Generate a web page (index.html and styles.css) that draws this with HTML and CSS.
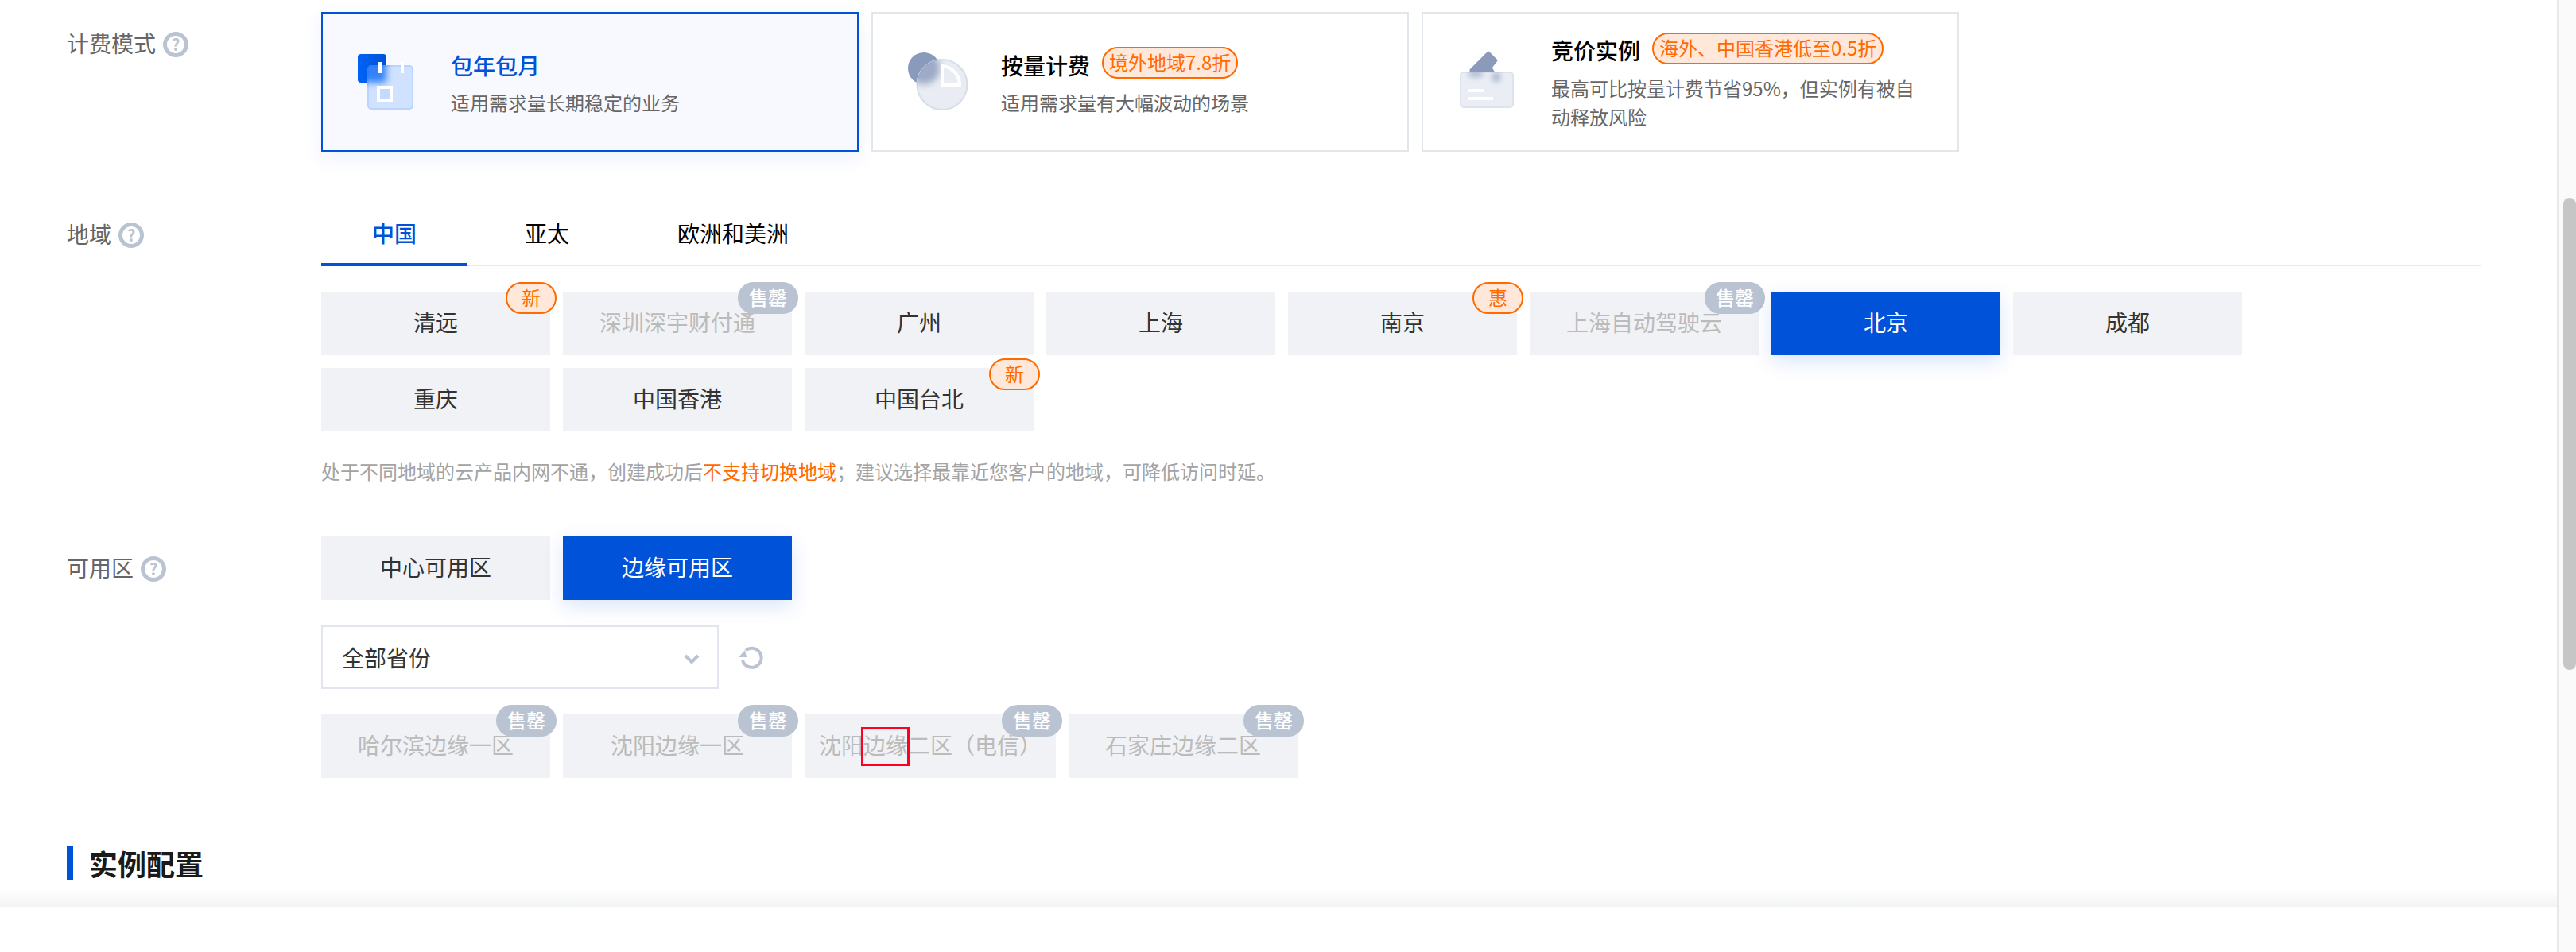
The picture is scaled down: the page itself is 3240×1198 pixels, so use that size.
FILE: index.html
```html
<!DOCTYPE html>
<html lang="zh-CN">
<head>
    <meta charset="UTF-8">
    <title>实例购买</title>
    <link rel="stylesheet" href="styles.css">
</head>
<body>
    <div class="page">
        <main class="main">
            <!-- 计费模式 -->
            <section class="form-row">
                <div class="form-label">计费模式<span class="help">?</span></div>
                <div class="plans">
                    <div class="plan plan-active">
                        <svg class="plan-icon" viewBox="0 0 80 80">
                            <defs>
                                <clipPath id="clipYear"><rect x="14" y="19" width="58" height="56" rx="4"/></clipPath>
                                <filter id="blurYear" x="-50%" y="-50%" width="200%" height="200%"><feGaussianBlur stdDeviation="4"/></filter>
                                <linearGradient id="gradYear" x1="0" y1="0" x2="1" y2="0"><stop offset="0" stop-color="#0062f5"/><stop offset="1" stop-color="#0052d9"/></linearGradient>
                            </defs>
                            <rect x="2" y="5" width="36" height="36" rx="4" fill="url(#gradYear)"/>
                            <rect x="15" y="20" width="56" height="54" rx="4" fill="#d0e2ff" stroke="#b8d4ff" stroke-width="2"/>
                            <g clip-path="url(#clipYear)"><rect x="2" y="5" width="36" height="36" rx="4" fill="#0062f5" opacity=".75" filter="url(#blurYear)"/></g>
                            <rect x="28" y="15" width="4" height="14" fill="#fff"/>
                            <rect x="56" y="15" width="4" height="14" fill="#fff"/>
                            <rect x="28" y="47" width="16" height="16" fill="#c4daff" stroke="#fff" stroke-width="4"/>
                        </svg>
                        <div class="plan-info">
                            <div class="plan-title">包年包月</div>
                            <div class="plan-desc">适用需求量长期稳定的业务</div>
                        </div>
                    </div>
                    <div class="plan">
                        <svg class="plan-icon" viewBox="0 0 80 80">
                            <defs>
                                <clipPath id="clipUsage"><circle cx="45" cy="43.5" r="32"/></clipPath>
                                <filter id="blurUsage" x="-50%" y="-50%" width="200%" height="200%"><feGaussianBlur stdDeviation="4"/></filter>
                            </defs>
                            <circle cx="22" cy="23" r="20" fill="#8a9abb"/>
                            <circle cx="45" cy="43.5" r="31.5" fill="#e9edf3" stroke="#d6deea" stroke-width="2"/>
                            <g clip-path="url(#clipUsage)"><circle cx="22" cy="23" r="20" fill="#8a9abb" opacity=".8" filter="url(#blurUsage)"/></g>
                            <path d="M45 20 A24 24 0 0 1 67 44 L45 44 Z" fill="#e9edf3" stroke="#fff" stroke-width="4"/>
                        </svg>
                        <div class="plan-info">
                            <div class="plan-title">按量计费<span class="pill">境外地域7.8折</span></div>
                            <div class="plan-desc">适用需求量有大幅波动的场景</div>
                        </div>
                    </div>
                    <div class="plan">
                        <svg class="plan-icon" viewBox="0 0 80 80">
                            <defs>
                                <clipPath id="clipSpot"><rect x="4" y="27" width="68" height="46" rx="4"/></clipPath>
                                <filter id="blurSpot" x="-50%" y="-50%" width="200%" height="200%"><feGaussianBlur stdDeviation="3"/></filter>
                            </defs>
                            <path d="M18 25 L40 3 L50 13 L43 22 L46 27 L18 27 Z" fill="#8a9abb" stroke="#8a9abb" stroke-width="3" stroke-linejoin="round"/>
                            <rect x="5" y="28" width="66" height="44" rx="4" fill="#eaeef4" stroke="#dde3ec" stroke-width="2"/>
                            <g clip-path="url(#clipSpot)" filter="url(#blurSpot)" fill="#8a9abb" opacity=".55">
                                <ellipse cx="24" cy="30" rx="10" ry="5"/>
                                <ellipse cx="50" cy="34" rx="6" ry="7"/>
                            </g>
                            <rect x="14" y="49" width="20" height="4" fill="#fff"/>
                            <rect x="14" y="59" width="32" height="4" fill="#fff"/>
                        </svg>
                        <div class="plan-info plan-info-long">
                            <div class="plan-title">竞价实例<span class="pill">海外、中国香港低至0.5折</span></div>
                            <div class="plan-desc">最高可比按量计费节省95%，但实例有被自动释放风险</div>
                        </div>
                    </div>
                </div>
            </section>

            <!-- 地域 -->
            <section class="form-row">
                <div class="form-label">地域<span class="help">?</span></div>
                <div class="form-body">
                    <div class="tabs">
                        <div class="tab tab-active">中国</div>
                        <div class="tab">亚太</div>
                        <div class="tab">欧洲和美洲</div>
                    </div>
                    <div class="cells cells-region">
                        <div class="cell">清远<span class="tag">新</span></div>
                        <div class="cell cell-off">深圳深宇财付通<span class="tag tag-off">售罄</span></div>
                        <div class="cell">广州</div>
                        <div class="cell">上海</div>
                        <div class="cell">南京<span class="tag">惠</span></div>
                        <div class="cell cell-off">上海自动驾驶云<span class="tag tag-off">售罄</span></div>
                        <div class="cell cell-active">北京</div>
                        <div class="cell">成都</div>
                        <div class="cell">重庆</div>
                        <div class="cell">中国香港</div>
                        <div class="cell">中国台北<span class="tag">新</span></div>
                    </div>
                    <p class="hint">处于不同地域的云产品内网不通，创建成功后<em>不支持切换地域</em>；建议选择最靠近您客户的地域，可降低访问时延。</p>
                </div>
            </section>

            <!-- 可用区 -->
            <section class="form-row">
                <div class="form-label">可用区<span class="help">?</span></div>
                <div class="form-body">
                    <div class="cells">
                        <div class="cell">中心可用区</div>
                        <div class="cell cell-active">边缘可用区</div>
                    </div>
                    <div class="filter">
                        <div class="select">
                            <span>全部省份</span>
                            <svg class="select-arrow" viewBox="0 0 20 12"><path d="M2 2 L10 10 L18 2" fill="none" stroke="#bac3d1" stroke-width="4"/></svg>
                        </div>
                        <svg class="refresh" viewBox="0 0 32 32">
                            <path d="M9 7.5 A12 12 0 1 1 5 20" fill="none" stroke="#bac3d1" stroke-width="4"/>
                            <path d="M0 16 L10 16 L8 7 Z" fill="#bac3d1"/>
                        </svg>
                    </div>
                    <div class="cells">
                        <div class="cell cell-off">哈尔滨边缘一区<span class="tag tag-off">售罄</span></div>
                        <div class="cell cell-off">沈阳边缘一区<span class="tag tag-off">售罄</span></div>
                        <div class="cell cell-off">沈阳边缘二区（电信）<span class="tag tag-off">售罄</span><span class="mark"></span></div>
                        <div class="cell cell-off">石家庄边缘二区<span class="tag tag-off">售罄</span></div>
                    </div>
                </div>
            </section>

            <h2 class="section-title">实例配置</h2>
            <div class="bottom-bar"></div>
        </main>
        <div class="scrollbar"><div class="scrollbar-thumb"></div></div>
    </div>
</body>
</html>
```

FILE: styles.css
```css
* {
    box-sizing: border-box;
}
body {
    margin: 0;
    height: 1198px;
    overflow: hidden;
    background-color: #fff;
    color: #333;
    font-family: "Noto Sans CJK SC", "Liberation Sans", sans-serif;
    font-size: 28px;
}
.page {
    display: flex;
    height: 100%;
}
.main {
    position: relative;
    flex: 1;
    padding: 15px 96px 0 84px;
    overflow: hidden;
}
.scrollbar {
    width: 24px;
    padding: 249px 0 0 6px;
    background-color: #fafafa;
    border-left: 2px solid #e8e8e8;
}
.scrollbar-thumb {
    height: 594px;
    background-color: #c6c6c6;
    border-radius: 8px;
}

/* form rows */
.form-row {
    display: flex;
    margin-bottom: 64px;
}
.form-label {
    display: flex;
    flex: none;
    align-items: center;
    gap: 9px;
    width: 320px;
    height: 32px;
    margin-top: 23px;
    color: #666;
    line-height: 32px;
}
.help {
    display: flex;
    flex: none;
    align-items: center;
    justify-content: center;
    width: 32px;
    height: 32px;
    margin-top: 4px;
    border: 5px solid #bac3d1;
    border-radius: 50%;
    color: #bac3d1;
    font-size: 20px;
    font-weight: 700;
    line-height: 1;
}
.form-body {
    flex: 1;
    min-width: 0;
}

/* billing plans */
.plans {
    display: flex;
    gap: 16px;
}
.plan {
    display: flex;
    align-items: center;
    gap: 39px;
    width: 676px;
    height: 176px;
    padding-left: 42px;
    background-color: #fff;
    border: 2px solid #e3e6eb;
}
.plan-active {
    background-color: #f8f9ff;
    border-color: #0052d9;
    box-shadow: 0 8px 24px rgba(0, 82, 217, 0.08);
}
.plan-icon {
    flex: none;
    width: 80px;
    height: 80px;
}
.plan-title {
    display: flex;
    align-items: center;
    gap: 15px;
    height: 44px;
    color: #000;
    font-weight: 500;
}
.plan-active .plan-title {
    color: #0052d9;
}
.plan-desc {
    margin-top: 7px;
    color: #666;
    font-size: 24px;
    line-height: 36px;
}
.plan-info-long {
    width: 470px;
}
.plan-info-long .plan-desc {
    margin-top: 8px;
}
.pill {
    height: 40px;
    padding: 0 7px;
    margin-top: -5px;
    background-color: #ffe8d9;
    border: 2px solid #ff6a00;
    border-radius: 20px;
    color: #ff6a00;
    font-size: 24px;
    font-weight: 400;
    line-height: 34px;
}

/* tabs */
.tabs {
    display: flex;
    gap: 8px;
    border-bottom: 2px solid #e6eaf0;
}
.tab {
    height: 80px;
    margin-bottom: -2px;
    padding: 0 64px;
    color: #000;
    line-height: 77px;
}
.tab-active {
    border-bottom: 4px solid #0052d9;
    color: #0052d9;
    font-weight: 500;
}

/* selectable cells */
.cells {
    display: flex;
    flex-wrap: wrap;
    gap: 16px;
}
.cells-region {
    margin-top: 32px;
}
.cell {
    position: relative;
    min-width: 288px;
    height: 80px;
    padding: 0 18px;
    background-color: #f0f2f5;
    color: #333;
    line-height: 77px;
    text-align: center;
}
.cell-active {
    background-color: #0052d9;
    color: #fff;
    box-shadow: 0 8px 24px rgba(0, 82, 217, 0.15);
}
.cell-off {
    color: #bbb;
}
.tag {
    position: absolute;
    top: -12px;
    right: -8px;
    width: 64px;
    height: 40px;
    background-color: #ffe8d9;
    border: 2px solid #ff6a00;
    border-radius: 20px;
    color: #ff6a00;
    font-size: 24px;
    line-height: 33px;
    text-align: center;
}
.tag-off {
    width: 76px;
    background-color: #bac3d1;
    border-color: #bac3d1;
    color: #fff;
    font-weight: 500;
}
.mark {
    position: absolute;
    top: 16px;
    left: 71px;
    width: 61px;
    height: 49px;
    border: 3px solid #ff0022;
}

.hint {
    margin: 32px 0 0;
    color: #a3a3a3;
    font-size: 24px;
    line-height: 36px;
}
.hint em {
    color: #ff6a00;
    font-style: normal;
}

/* province filter */
.filter {
    display: flex;
    align-items: center;
    gap: 25px;
    margin: 32px 0;
}
.select {
    display: flex;
    align-items: center;
    justify-content: space-between;
    width: 500px;
    height: 80px;
    padding: 0 22px 0 24px;
    background-color: #fff;
    border: 2px solid #e1e6ee;
}
.select-arrow {
    width: 20px;
    height: 12px;
    margin-top: 4px;
}
.refresh {
    width: 32px;
    height: 32px;
}

/* section heading */
.section-title {
    height: 44px;
    margin: 85px 0 0;
    padding-left: 20px;
    border-left: 8px solid #0052d9;
    color: #1a1a1a;
    font-size: 36px;
    font-weight: 700;
    line-height: 44px;
}

.bottom-bar {
    position: absolute;
    right: 0;
    bottom: 0;
    left: 0;
    height: 56px;
    background-color: #fff;
}
.bottom-bar::before {
    content: "";
    position: absolute;
    top: -22px;
    right: 0;
    left: 0;
    height: 22px;
    background: linear-gradient(rgba(241, 242, 244, 0), #f1f2f4);
}
```
